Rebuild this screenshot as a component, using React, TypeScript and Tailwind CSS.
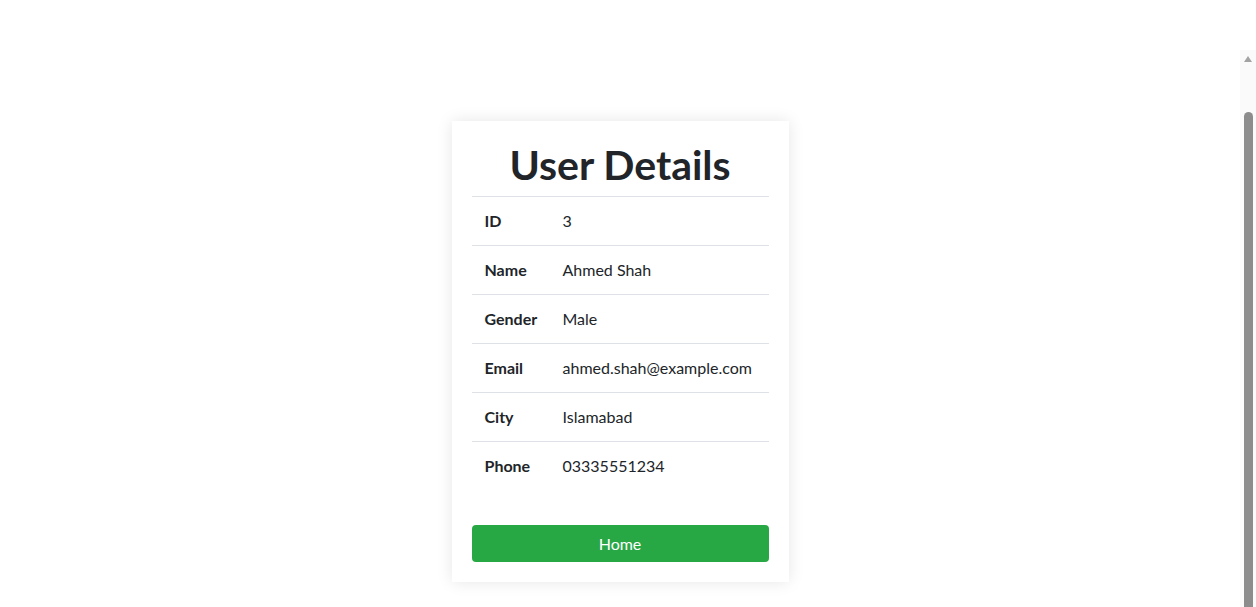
const user = [
    { label: 'ID', value: '3' },
    { label: 'Name', value: 'Ahmed Shah' },
    { label: 'Gender', value: 'Male' },
    { label: 'Email', value: 'ahmed.shah@example.com' },
    { label: 'City', value: 'Islamabad' },
    { label: 'Phone', value: '03335551234' },
]

export default function App() {
    return (
        <div className="h-screen flex bg-white text-[#212529] font-['Lato',sans-serif] overflow-hidden">
            <main className="flex-1 flex justify-center items-start pt-[121px]">
                <div className="w-[337px] bg-white p-5 shadow-[0_0_15px_rgba(0,0,0,0.1)]">
                    <h1 className="text-[41px] leading-[48px] font-bold text-center mb-[7px]">User Details</h1>
                    <table className="w-full table-fixed text-base border-t border-[#dee2e6]">
                        <tbody>
                            {user.map((row, i) => (
                                <tr key={row.label} className={i < user.length - 1 ? 'border-b border-[#dee2e6]' : ''}>
                                    <th className="text-left font-bold pl-[13px] pr-3 py-3 leading-6 w-[79px] whitespace-nowrap">{row.label}</th>
                                    <td className="p-3 leading-6 whitespace-nowrap">{row.value}</td>
                                </tr>
                            ))}
                        </tbody>
                    </table>
                    <button className="mt-[35px] w-full h-[37px] bg-[#28a745] text-white rounded leading-6">
                        Home
                    </button>
                </div>
            </main>
            {/* scrollbar strip */}
            <div className="w-4 shrink-0 mt-[50px] bg-[#fafafa] flex flex-col items-center">
                <svg width="10" height="8" viewBox="0 0 10 8" className="mt-[5px]">
                    <path d="M5 1 L9 7 L1 7 Z" fill="#a3a3a3" />
                </svg>
                <div className="mt-[49px] w-[9px] flex-1 rounded-t-full bg-[#8c8c8c]" />
            </div>
        </div>
    )
}
